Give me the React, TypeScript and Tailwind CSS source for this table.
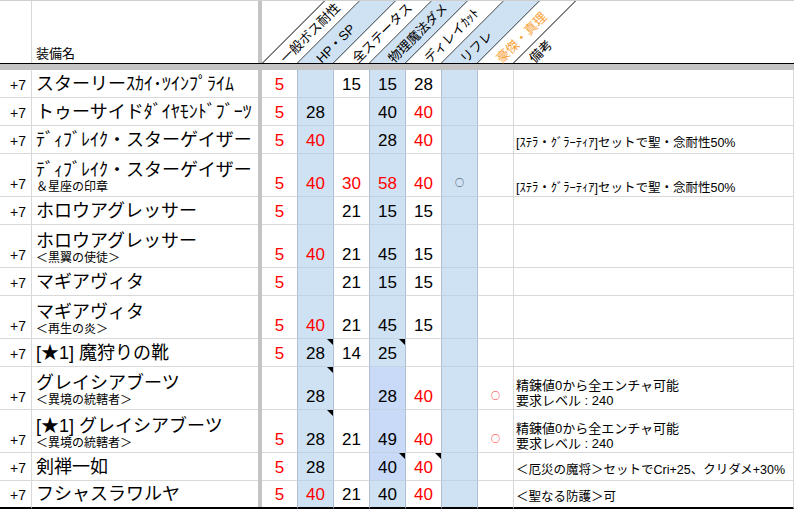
import React from "react";

type CellData = {
  v: string;
  red?: boolean;
  tri?: boolean;
  lav?: boolean;
  circ?: "red" | "dark";
} | null;

type RowData = {
  name: string;
  sub?: string;
  tall?: boolean;
  last?: boolean;
  cells: CellData[];
  note?: string[];
};

const R = (v: string, extra: Partial<NonNullable<CellData>> = {}): CellData => ({ v, red: true, ...extra });
const K = (v: string, extra: Partial<NonNullable<CellData>> = {}): CellData => ({ v, ...extra });

const STELLA = "[ｽﾃﾗ・ｸﾞﾗｰﾃｨｱ]セットで聖・念耐性50%";
const GLACIA = ["精錬値0から全エンチャ可能", "要求レベル : 240"];

const rows: RowData[] = [
  { name: "スターリーｽｶｲ･ﾂｲﾝﾌﾟﾗｲﾑ", cells: [R("5"), null, K("15"), K("15"), K("28"), null, null] },
  { name: "トゥーサイドﾀﾞｲﾔﾓﾝﾄﾞﾌﾞｰﾂ", cells: [R("5"), K("28"), null, K("40"), R("40"), null, null] },
  { name: "ﾃﾞｨﾌﾞﾚｲｸ・スターゲイザー", cells: [R("5"), R("40"), null, K("28"), R("40"), null, null], note: [STELLA] },
  {
    name: "ﾃﾞｨﾌﾞﾚｲｸ・スターゲイザー",
    sub: "＆星座の印章",
    tall: true,
    cells: [R("5"), R("40"), R("30"), R("58"), R("40"), K("○", { circ: "dark" }), null],
    note: [STELLA],
  },
  { name: "ホロウアグレッサー", cells: [R("5"), null, K("21"), K("15"), K("15"), null, null] },
  { name: "ホロウアグレッサー", sub: "＜黒翼の使徒＞", tall: true, cells: [R("5"), R("40"), K("21"), K("45"), K("15"), null, null] },
  { name: "マギアヴィタ", cells: [R("5"), null, K("21"), K("15"), K("15"), null, null] },
  { name: "マギアヴィタ", sub: "＜再生の炎＞", tall: true, cells: [R("5"), R("40"), K("21"), K("45"), K("15"), null, null] },
  { name: "[★1] 魔狩りの靴", cells: [R("5"), K("28", { tri: true }), K("14"), K("25", { tri: true }), null, null, null] },
  {
    name: "グレイシアブーツ",
    sub: "＜異境の統轄者＞",
    tall: true,
    cells: [null, K("28", { tri: true }), null, K("28", { lav: true }), R("40"), null, K("○", { circ: "red" })],
    note: GLACIA,
  },
  {
    name: "[★1] グレイシアブーツ",
    sub: "＜異境の統轄者＞",
    tall: true,
    cells: [R("5"), K("28", { tri: true }), K("21"), K("49", { lav: true }), R("40"), null, K("○", { circ: "red" })],
    note: GLACIA,
  },
  {
    name: "剣禅一如",
    cells: [R("5"), K("28"), null, K("40", { tri: true, lav: true }), R("40", { tri: true }), null, null],
    note: ["＜厄災の魔将＞セットでCri+25、クリダメ+30%"],
  },
  {
    name: "フシャスラワルヤ",
    last: true,
    cells: [R("5"), R("40"), K("21"), K("40"), R("40"), null, null],
    note: ["＜聖なる防護＞可"],
  },
];

function DataCell({ cell, i, tall, last }: { cell: CellData; i: number; tall?: boolean; last?: boolean }) {
  const blue = i === 1 || i === 3 || i === 5;
  const h = tall ? "h-[43px]" : "h-[28px]";
  const br = i <= 5 ? "border-r border-r-[#aebfd3]" : "border-r border-r-[#d9d9d9]";
  const bb = last
    ? "border-b-2 border-b-black"
    : blue
    ? "border-b border-b-[#c3d3e3]"
    : "border-b border-b-[#d9d9d9]";
  const bg = cell?.lav ? "bg-[#c9daf8]" : blue ? "bg-[#cfe2f3]" : "bg-white";
  let content: React.ReactNode = null;
  if (cell) {
    if (cell.circ) {
      content = (
        <span
          className={`pb-[1px] text-[9px] leading-[17px] font-bold font-['Noto_Sans_CJK_JP',sans-serif] ${
            cell.circ === "red" ? "text-[#ff2a2a]" : "text-[#3b4657]"
          }`}
        >
          {cell.v}
        </span>
      );
    } else {
      content = (
        <span className={`text-[17px] leading-[17px] ${cell.red ? "text-[#ff0000]" : "text-black"}`}>{cell.v}</span>
      );
    }
  }
  return (
    <div className={`relative flex w-[36px] shrink-0 items-end justify-center pb-[4px] ${h} ${br} ${bb} ${bg}`}>
      {content}
      {cell?.tri && (
        <div className="absolute right-0 top-0 h-0 w-0 border-l-[6px] border-t-[6px] border-l-transparent border-t-black" />
      )}
    </div>
  );
}

function DataRow({ row }: { row: RowData }) {
  const h = row.tall ? "h-[43px]" : "h-[28px]";
  const bb = row.last ? "border-b-2 border-b-black" : "border-b border-b-[#d9d9d9]";
  return (
    <div className="flex w-full">
      <div className={`flex w-[32px] shrink-0 items-end justify-end border-r border-r-[#d9d9d9] pr-[5px] pb-[5px] ${h} ${bb}`}>
        <span className="text-[14px] leading-[14px]">+7</span>
      </div>
      <div
        className={`flex w-[226px] shrink-0 flex-col justify-end pl-[4px] ${
          row.tall ? "pb-[1px]" : "pb-[4px]"
        } ${h} ${bb}`}
      >
        <div className={`whitespace-nowrap text-[18px] ${row.tall ? "leading-[19px]" : "leading-[18px]"}`}>{row.name}</div>
        {row.sub && <div className="whitespace-nowrap text-[12px] leading-[15px]">{row.sub}</div>}
      </div>
      <div className={`w-[4px] shrink-0 bg-[#c4c4c4] ${h} ${row.last ? "border-b-2 border-b-black" : ""}`} />
      {row.cells.map((c, i) => (
        <DataCell key={i} cell={c} i={i} tall={row.tall} last={row.last} />
      ))}
      <div
        className={`flex flex-1 flex-col justify-end border-r border-r-[#d9d9d9] pl-[2px] ${
          row.tall ? "pb-[1px]" : "pb-[3px]"
        } ${h} ${bb}`}
      >
        {row.note?.map((t, i) => (
          <div
            key={i}
            className={`whitespace-nowrap ${row.note!.length > 1 ? "text-[13px] leading-[15px]" : "text-[12.5px] leading-[14px]"}`}
          >
            {t}
          </div>
        ))}
      </div>
    </div>
  );
}

function Header() {
  const lbl = "absolute top-[52px] h-[16px] origin-left -rotate-45 whitespace-nowrap text-[13px] leading-[16px]";
  return (
    <div className="flex h-[64px] w-full border-t border-b border-t-[#cfcfcf] border-b-black">
      <div className="h-full w-[32px] shrink-0 border-r border-r-[#d9d9d9]" />
      <div className="flex h-full w-[226px] shrink-0 items-end pb-[2px] pl-[4px]">
        <span className="text-[13px] leading-[14px]">装備名</span>
      </div>
      <div className="h-full w-[4px] shrink-0 bg-[#c4c4c4]" />
      <div className="relative flex h-full flex-1">
        <div className="h-full w-[36px] shrink-0 origin-bottom-left -skew-x-45 border-x border-x-black bg-white" />
        <div className="h-full w-[36px] shrink-0 origin-bottom-left -skew-x-45 border-r border-r-black bg-[#cfe2f3]" />
        <div className="h-full w-[36px] shrink-0 origin-bottom-left -skew-x-45 border-r border-r-black bg-white" />
        <div className="h-full w-[36px] shrink-0 origin-bottom-left -skew-x-45 border-r border-r-black bg-[#cfe2f3]" />
        <div className="h-full w-[36px] shrink-0 origin-bottom-left -skew-x-45 border-r border-r-black bg-white" />
        <div className="h-full w-[36px] shrink-0 origin-bottom-left -skew-x-45 border-r border-r-black bg-[#cfe2f3]" />
        <div className="h-full w-[36px] shrink-0 origin-bottom-left -skew-x-45 border-r border-r-black bg-white" />
        <div className={`${lbl} left-[21px]`}>一般ボス耐性</div>
        <div className={`${lbl} left-[57px]`}>HP・SP</div>
        <div className={`${lbl} left-[93px]`}>全ステータス</div>
        <div className={`${lbl} left-[129px]`}>物理魔法ダメ</div>
        <div className={`${lbl} left-[165px]`}>ディレイｶｯﾄ</div>
        <div className={`${lbl} left-[201px]`}>リフレ</div>
        <div className={`${lbl} left-[237px] text-[#f6a33a]`}>豪傑・真理</div>
        <div className={`${lbl} left-[270px]`}>備考</div>
      </div>
    </div>
  );
}

export default function App() {
  return (
    <div className="relative h-[509px] w-[794px] overflow-hidden bg-white text-black font-['Liberation_Sans','Noto_Sans_CJK_JP',sans-serif]">
      <Header />
      <div className="h-[6px] w-full bg-[#c4c4c4]" />
      {rows.map((row, idx) => (
        <DataRow key={idx} row={row} />
      ))}
    </div>
  );
}
